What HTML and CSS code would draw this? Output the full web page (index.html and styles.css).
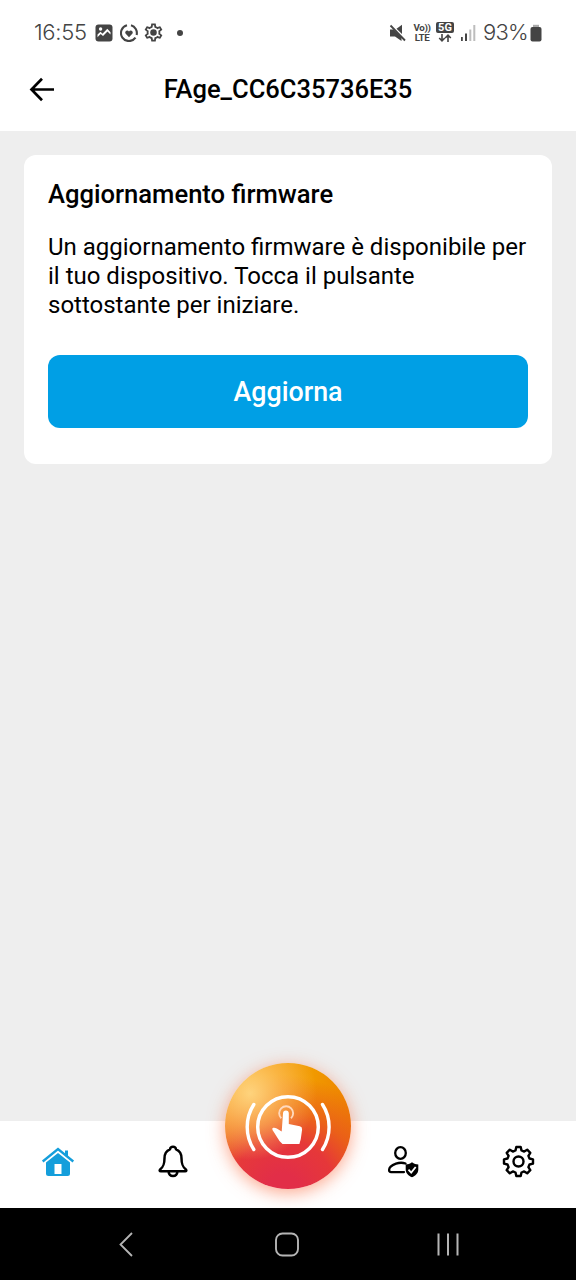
FILE: index.html
```html
<!DOCTYPE html>
<html lang="it">
<head>
<meta charset="utf-8">
<title>Aggiornamento firmware</title>
<link rel="stylesheet" href="styles.css">
</head>
<body>
<div class="screen">
  <div class="status">
    <div class="status-left">
      <span class="time">16:55</span>
      <svg class="s-icon" width="18" height="18" viewBox="0 0 18 18"><rect x=".5" y=".5" width="17" height="17" rx="3" fill="#444"/><path d="M2.500 13.500v-3l3-2.800 2 2 4.800-5 3.200 3.500v2.300l-3-3-4.500 4.600-2.300-2-3 3z" fill="#fff"/><circle cx="5.600" cy="5" r="1.700" fill="#fff"/></svg>
      <svg class="s-icon" width="18" height="18" viewBox="0 0 18 18"><path d="M7 1.300A8 8 0 1 0 15.500 13.700M11 1.300A8 8 0 0 1 16.600 11" fill="none" stroke="#444" stroke-width="2.100"/><path d="M9 13.300 5.500 9.600C4.200 7.400 7.400 5.200 9 7.400c1.600-2.200 4.800 0 3.500 2.200z" fill="#444"/></svg>
      <svg class="s-icon s-gear" width="19" height="19" viewBox="1.500 1.500 21 21"><path fill="#444" d="M19.430 12.980c.04-.32.07-.64.07-.98 0-.34-.03-.66-.07-.98l2.110-1.650c.19-.15.24-.42.12-.64l-2-3.460c-.09-.16-.26-.25-.44-.25-.06 0-.12.01-.17.03l-2.490 1c-.52-.4-1.080-.73-1.690-.98l-.38-2.650C14.460 2.180 14.250 2 14 2h-4c-.25 0-.46.18-.49.42l-.38 2.650c-.61.25-1.170.59-1.690.98l-2.490-1c-.06-.02-.12-.03-.18-.03-.17 0-.34.09-.43.25l-2 3.460c-.13.22-.07.49.12.64l2.110 1.650c-.04.32-.07.65-.07.98 0 .33.03.66.07.98l-2.110 1.650c-.19.15-.24.42-.12.64l2 3.460c.09.16.26.25.44.25.06 0 .12-.01.17-.03l2.490-1c.52.4 1.080.73 1.690.98l.38 2.650c.03.24.24.42.49.42h4c.25 0 .46-.18.49-.42l.38-2.650c.61-.25 1.170-.59 1.690-.98l2.490 1c.06.02.12.03.18.03.17 0 .34-.09.43-.25l2-3.460c.12-.22.07-.49-.12-.64l-2.110-1.650zm-1.980-1.710c.04.31.05.52.05.73 0 .21-.02.43-.05.73l-.14 1.130.89.7 1.080.84-.7 1.210-1.270-.51-1.040-.42-.9.68c-.43.32-.84.56-1.250.73l-1.060.43-.16 1.130-.2 1.350h-1.400l-.19-1.350-.16-1.130-1.060-.43c-.43-.18-.83-.41-1.230-.71l-.91-.7-1.060.43-1.270.51-.7-1.210 1.080-.84.89-.7-.14-1.130c-.03-.31-.05-.54-.05-.74s.02-.43.05-.73l.14-1.130-.89-.7-1.080-.84.7-1.210 1.270.51 1.040.42.9-.68c.43-.32.84-.56 1.250-.73l1.060-.43.16-1.130.2-1.350h1.390l.19 1.350.16 1.130 1.060.43c.43.18.83.41 1.230.71l.91.7 1.060-.43 1.270-.51.7 1.210-1.070.85-.89.7.14 1.130z"/><circle cx="12" cy="12" r="3.600" fill="#444"/></svg>
      <span class="dot"></span>
    </div>
    <div class="status-right">
      <svg class="s-mute" width="18" height="18" viewBox="0 0 18 18"><path d="M1 5.500h3.500L6 7l6.500 6.500V17L6 12.500H1zM7.500 4.700 13 .8V10z" fill="#444"/><path d="M1.500 1.500l14.500 15" stroke="#444" stroke-width="1.800"/></svg>
      <div class="volte"><span>Vo))</span><span>LTE</span></div>
      <div class="fiveg"><span class="fiveg-tag">5G</span><svg width="14" height="8" viewBox="0 0 14 8"><path d="M4 0v7M1.200 4 4 6.800 6.800 4M10 8V1M7.200 4 10 1.200 12.800 4" fill="none" stroke="#444" stroke-width="1.600"/></svg></div>
      <svg class="s-signal" width="16" height="16" viewBox="0 0 16 16"><path d="M0 12h1.800v4H0zM4 8.500h2v7.500H4z" fill="#444"/><path d="M8.300 4.500h2v11.500h-2zM12.300 0h2v16h-2z" fill="#bdbdbd"/></svg>
      <span class="percent">93%</span>
      <svg class="s-battery" width="12" height="18" viewBox="0 0 12 18"><path d="M3 .8h6V4H3z" fill="#aaa"/><rect x=".5" y="3" width="11" height="14.500" rx="2" fill="#444"/></svg>
    </div>
  </div>

  <header class="header">
    <svg class="back" width="26" height="26" viewBox="0 0 26 26"><path d="M25 12.500H2.500M13 1.800 2.500 12.500 13 23.200" fill="none" stroke="#000" stroke-width="2.700"/></svg>
    <h1 class="title">FAge_CC6C35736E35</h1>
  </header>

  <main class="content">
    <section class="card">
      <h2 class="card-title">Aggiornamento firmware</h2>
      <p class="card-text">Un aggiornamento firmware è disponibile per il tuo dispositivo. Tocca il pulsante sottostante per iniziare.</p>
      <button class="update">Aggiorna</button>
    </section>
  </main>

  <nav class="tabs">
    <div class="tab"><svg width="34" height="34" viewBox="0 0 34 34"><path d="M1.700 17.500 17 5l15.300 12.500" fill="none" stroke="#149edb" stroke-width="2.300"/><path d="M24 6.500h3v7.500l-3-2.500z" fill="#149edb"/><path fill-rule="evenodd" d="M5 18.600 17 9l12 9.600V29.500q0 2.500-2.500 2.500h-19Q5 32 5 29.500zM13.500 20v10h7V20z" fill="#149edb"/></svg></div>
    <div class="tab"><svg width="34" height="34" viewBox="0 0 34 34"><path d="M17 2.800c-1.700 0-2.800 1-3 2.500-4 1.500-5.500 5-5.500 9 0 6-1 8.400-4.400 11.200-.9 1-.5 1.800.8 1.800h24.200c1.300 0 1.700-.8.8-1.800-3.400-2.800-4.400-5.200-4.400-11.200 0-4-1.500-7.500-5.500-9-.2-1.500-1.300-2.500-3-2.500zM12.500 27.300c.3 3 2 4.700 4.500 4.700s4.200-1.700 4.500-4.700" fill="none" stroke="#000" stroke-width="2.500" stroke-linejoin="round"/></svg></div>
    <div class="tab tab-center">
      <div class="touch"><svg width="126" height="126" viewBox="0 0 126 126"><g fill="none" stroke="#fff"><circle cx="63" cy="64" r="30.300" stroke-width="3.500"/><path d="M28.800 41.500c-8.800 13.500-8.800 31.500 0 45M97.500 41.500c8.800 13.500 8.800 31.500 0 45" stroke-width="3.400" stroke-linecap="round"/><path d="M56.300 55.300a7 7 0 1 1 9.700 0" stroke="#ffd9bd" stroke-width="1.900"/></g><path d="M58 50.500q0-2.900 2.900-2.900t2.900 2.900V61l11 2.200q2.500.6 2.300 3.300l-1.300 9.500-1.400 5H57.500L54.500 78l-7-11q-.9-1.800.8-2.200 1.500-.4 3.500.8l4.900 3z" fill="#fff"/></svg></div>
    </div>
    <div class="tab"><svg width="34" height="34" viewBox="0 0 34 34"><g fill="none" stroke="#000" stroke-width="2.300"><ellipse cx="14.500" cy="9" rx="5.300" ry="5.800"/><path d="M19.500 19.500C17 18.600 13 18.600 10 19.700c-4.500 1.700-6.900 4.600-6.900 6.400 0 1.400.9 2 2 2H18" stroke-linecap="round"/></g><path d="M26 18.300c2 1.600 4 2.100 6.300 2.200v5c0 3.800-3 6.500-6.300 7.700-3.300-1.200-6.300-3.900-6.300-7.700v-5c2.300-.1 4.300-.6 6.300-2.200z" fill="#000"/><path d="m22.500 25.700 2.700 2.900 4.500-5.600" fill="none" stroke="#fff" stroke-width="1.800"/></svg></div>
    <div class="tab"><svg width="34" height="34" viewBox="-17.500 -17.500 34 34"><g fill="none" stroke="#000" stroke-width="2.400" stroke-linejoin="round"><path d="M-3-11-2.200-14.500H2.200L3-11 5.660-9.900 8.700-11.800 11.800-8.700 9.900-5.660 11-3 14.500-2.200V2.200L11 3 9.900 5.660 11.800 8.700 8.700 11.800 5.660 9.900 3 11 2.200 14.500H-2.200L-3 11-5.660 9.900-8.700 11.800-11.800 8.700-9.900 5.660-11 3-14.500 2.200V-2.200L-11-3-9.900-5.660-11.800-8.700-8.700-11.800-5.660-9.900z"/><circle r="5"/></g></svg></div>
  </nav>

  <div class="system">
    <svg width="14" height="26" viewBox="0 0 14 26"><path d="M13 1 1.500 12.500 13 24" fill="none" stroke="#b5b5b5" stroke-width="1.800"/></svg>
    <svg width="26" height="26" viewBox="0 0 26 26"><rect x="2" y="1.500" width="22" height="22" rx="6.500" fill="none" stroke="#b5b5b5" stroke-width="1.900"/></svg>
    <svg width="24" height="26" viewBox="0 0 24 26"><path d="M2.500 1.500v22M12 1.500v22M21.500 1.500v22" stroke="#b5b5b5" stroke-width="2"/></svg>
  </div>
</div>
</body>
</html>
```
FILE: styles.css
```css
* { box-sizing: border-box; }
body { margin: 0; background: #eee; color: #000; font-family: Roboto, "Liberation Sans", sans-serif; }
h1, h2, p { margin: 0; }
svg { display: block; flex: none; }
.screen { width: 576px; height: 1280px; display: flex; flex-direction: column; background: #eee; overflow: hidden; }

.status { height: 65px; flex: none; padding: 0 33px 0 34px; display: flex; justify-content: space-between; align-items: center; background: #fff; color: #444; }
.status-left, .status-right { display: flex; align-items: center; }
.time, .percent { font: 300 22px/26px Inter, Roboto, sans-serif; white-space: nowrap; margin-top: -2px; }
.time { width: 53px; letter-spacing: -.3px; }
.percent { width: 44px; letter-spacing: -.8px; margin-right: 3px; margin-left: 6px; }
.s-icon { margin-left: 7px; }
.time + .s-icon { margin-left: 8px; }
.s-gear { margin-left: 6px; }
.dot { width: 6px; height: 6px; border-radius: 50%; background: #444; margin-left: 14px; }
.s-battery { margin-right: 1px; }
.volte { width: 18px; margin: 0 5px 0 7px; font: 700 9.800px/9.500px Roboto, sans-serif; letter-spacing: -.4px; display: flex; flex-direction: column; align-items: center; white-space: nowrap; }
.fiveg { width: 18px; display: flex; flex-direction: column; align-items: center; gap: 1px; margin: -2px 7px 0 0; }
.fiveg-tag { width: 18px; height: 11px; border-radius: 2px; background: #444; color: #fff; font: 700 11px/11px Roboto, sans-serif; text-align: center; }
.s-mute { margin-right: -1px; }

.header { height: 66px; flex: none; display: grid; grid-template-columns: 26px 1fr 26px; align-items: start; padding: 9px 29px 0; background: #fff; }
.back { margin-top: 3px; }
.title { font-size: 25.500px; font-weight: 500; line-height: 30px; text-align: center; white-space: nowrap; }

.content { flex: 1; padding: 24px; }
.card { height: 309px; padding: 24px; border-radius: 12px; background: #fff; }
.card-title { font-size: 25.600px; font-weight: 500; line-height: 30px; white-space: nowrap; }
.card-text { margin-top: 24px; font-size: 24px; line-height: 28.800px; }
.update { display: block; width: 480px; height: 73px; margin-top: 35.600px; padding: 1px 0 0; border: 0; border-radius: 12px; background: #009fe5; color: #fff; font: 500 26.800px/72px Roboto, sans-serif; text-align: center; }

.tabs { position: relative; height: 87px; flex: none; display: grid; grid-template-columns: repeat(5, 1fr); background: #fff; }
.tab { display: flex; justify-content: center; padding-top: 23px; }
.touch { position: absolute; left: 225px; top: -58px; width: 126px; height: 126px; border-radius: 50%; box-shadow: 0 4px 17px rgba(250, 105, 60, .58); background: radial-gradient(circle at 20% 24%, rgba(255, 215, 130, .95), rgba(255, 195, 100, .6) 24%, rgba(255, 170, 60, 0) 48%), radial-gradient(circle at 46% 102%, #e22e48 12%, rgba(229, 48, 62, .92) 36%, rgba(232, 70, 40, .6) 55%, rgba(240, 130, 0, 0) 80%), linear-gradient(100deg, #f6a726, #f19a00 60%, #ec7a00); }

.system { height: 72px; flex: none; display: grid; grid-template-columns: 14px 26px 24px; column-gap: 141px; padding: 24px 0 0 119px; background: #000; }
.system svg:nth-child(3) { margin-left: -5px; }
```
